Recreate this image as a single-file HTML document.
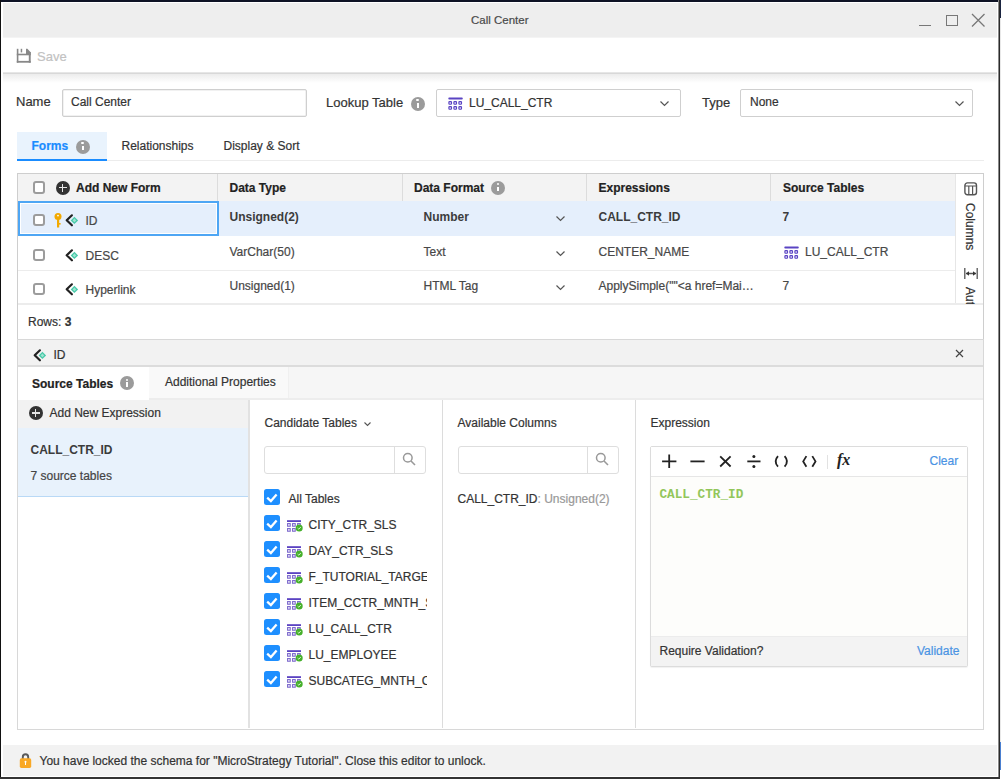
<!DOCTYPE html>
<html><head><meta charset="utf-8">
<style>
*{box-sizing:border-box;margin:0;padding:0}
html,body{width:1001px;height:780px;overflow:hidden;background:#fff}
body{position:relative;font-family:"Liberation Sans",sans-serif;font-size:12px;color:#333}
.a{position:absolute}
.t{position:absolute;white-space:nowrap;line-height:1}
svg{position:absolute;overflow:visible}
.info{position:absolute;width:14px;height:14px;border-radius:50%;background:#9b9b9b}
.info:before{content:"";position:absolute;left:5.9px;top:2.6px;width:2.2px;height:2.2px;background:#fff;border-radius:50%}
.info:after{content:"";position:absolute;left:6px;top:6.3px;width:2px;height:4.7px;background:#fff}
.cb{position:absolute;width:12.5px;height:12.5px;border:2px solid #9c9c9c;border-radius:3px;background:#fff}
.cbc{position:absolute;width:16px;height:16px;border-radius:2px;background:#1e8fff}
.cbc:after{content:"";position:absolute;left:5px;top:1.8px;width:5.5px;height:9.5px;border-right:2.3px solid #fff;border-bottom:2.3px solid #fff;transform:rotate(42deg)}
.plus{position:absolute;width:14px;height:14px;border-radius:50%;background:#333}
.plus:before{content:"";position:absolute;left:3px;top:6.25px;width:8px;height:1.6px;background:#e6e6e6}
.plus:after{content:"";position:absolute;left:6.2px;top:3px;width:1.6px;height:8px;background:#e6e6e6}
.t{-webkit-text-stroke:0.2px currentColor}</style></head><body>
<!-- window frame -->
<div class="a" style="left:0;top:0;width:1001px;height:2px;background:#0e1325"></div>
<div class="a" style="left:0;top:0;width:1px;height:779px;background:#111"></div>
<div class="a" style="left:998px;top:0;width:1px;height:779px;background:#8a8a8a"></div><div class="a" style="left:999px;top:0;width:1px;height:779px;background:#2a2a2a"></div><div class="a" style="left:1000px;top:18px;width:1px;height:724px;background:#e8e8e8"></div>
<div class="a" style="left:1000px;top:0;width:1px;height:18px;background:#1a2440"></div><div class="a" style="left:1000px;top:742px;width:1px;height:28px;background:#4a7fd0"></div>
<div class="a" style="left:0;top:777px;width:1000px;height:2px;background:#333"></div>

<!-- title bar -->
<div class="a" style="left:3px;top:3px;width:994px;height:34px;background:#eeeeee"></div><div class="a" style="left:3px;top:37px;width:994px;height:1px;background:#f4f4f4"></div>
<div class="t" style="left:471px;top:15px;font-size:11.5px;color:#4a4a4a">Call Center</div>
<div class="a" style="left:919px;top:24.5px;width:11.5px;height:1.5px;background:#777"></div>
<div class="a" style="left:946px;top:14.5px;width:11.5px;height:11px;border:1.5px solid #777"></div>
<svg style="left:972px;top:13.5px" width="12.5" height="12.5"><path d="M0 0L12.5 12.5M12.5 0L0 12.5" stroke="#777" stroke-width="1.3"/></svg>

<!-- toolbar -->
<svg style="left:16px;top:48px" width="16" height="16" viewBox="0 0 16 16"><g fill="#888"><rect x="0.8" y="0.8" width="1.6" height="13.9"/><rect x="4.7" y="0.8" width="1.5" height="3.6"/><path d="M10 0.8H11.4L14.7 4.2V6.5H10Z"/><rect x="0.8" y="5.7" width="13.9" height="1.6"/><rect x="12.8" y="4" width="1.9" height="10.7"/><rect x="0.8" y="12.9" width="13.9" height="1.8"/></g></svg>
<div class="t" style="left:37px;top:49.5px;font-size:13px;color:#c2c2c2">Save</div>
<div class="a" style="left:3px;top:72px;width:994px;height:1px;background:#e6e6e6"></div><div class="a" style="left:3px;top:73px;width:994px;height:1px;background:#d8d8d8"></div>
<div class="a" style="left:3px;top:74px;width:994px;height:9px;background:linear-gradient(#ececec,#ffffff)"></div>

<!-- name row -->
<div class="t" style="left:16px;top:95px;font-size:13px;color:#333">Name</div>
<div class="a" style="left:62px;top:89px;width:245px;height:28px;border:1px solid #cfcfcf;border-radius:2px;box-shadow:inset 0 0 0 0.5px #e4e4e4"></div>
<div class="t" style="left:71px;top:96px;color:#333">Call Center</div>

<div class="t" style="left:326px;top:96px;font-size:13px;color:#333">Lookup Table</div>
<div class="info" style="left:410.5px;top:96.7px"></div>
<div class="a" style="left:436px;top:89px;width:245px;height:28px;border:1px solid #cfcfcf;border-radius:2px"></div>
<svg style="left:448px;top:97px" width="15" height="13" viewBox="0 0 15 13"><rect x="0.3" y="0.6" width="14.5" height="1.8" rx="0.9" fill="#5a44c3"/><g fill="#e4def6" stroke="#5a44c3" stroke-width="1.15"><rect x="0.9" y="4.6" width="2.6" height="2.6" rx="0.6"/><rect x="5.9" y="4.6" width="2.6" height="2.6" rx="0.6"/><rect x="10.9" y="4.6" width="2.6" height="2.6" rx="0.6"/><rect x="0.9" y="9.6" width="2.6" height="2.6" rx="0.6"/><rect x="5.9" y="9.6" width="2.6" height="2.6" rx="0.6"/><rect x="10.9" y="9.6" width="2.6" height="2.6" rx="0.6"/></g></svg>
<div class="t" style="left:469px;top:97px;color:#333">LU_CALL_CTR</div>
<svg style="left:660px;top:100.5px" width="9" height="5"><path d="M0.5 0.5L4.5 4.5L8.5 0.5" fill="none" stroke="#555" stroke-width="1.2"/></svg>

<div class="t" style="left:702px;top:96px;font-size:13px;color:#333">Type</div>
<div class="a" style="left:740px;top:89px;width:233px;height:28px;border:1px solid #cfcfcf;border-radius:2px"></div>
<div class="t" style="left:750px;top:96px;color:#333">None</div>
<svg style="left:955px;top:100.5px" width="9" height="5"><path d="M0.5 0.5L4.5 4.5L8.5 0.5" fill="none" stroke="#555" stroke-width="1.2"/></svg>

<!-- tabs -->
<div class="a" style="left:17px;top:132px;width:90px;height:27px;background:#e9f3fd"></div>
<div class="a" style="left:17px;top:159px;width:90px;height:2px;background:#1a8cff"></div>
<div class="a" style="left:107px;top:160px;width:877px;height:1px;background:#ececec"></div>
<div class="t" style="left:31.5px;top:140px;font-weight:bold;color:#1a8cff">Forms</div>
<div class="info" style="left:75.5px;top:139.5px"></div>
<div class="t" style="left:121.5px;top:139.5px;color:#333">Relationships</div>
<div class="t" style="left:223.5px;top:139.5px;color:#333">Display &amp; Sort</div>

<!-- forms table -->
<div class="a" style="left:17px;top:173px;width:967px;height:167px;border:1px solid #cecece"></div>
<div class="a" style="left:18px;top:174px;width:937px;height:27px;background:#f3f3f3"></div>
<div class="a" style="left:217px;top:174px;width:1px;height:27px;background:#dcdcdc"></div>
<div class="a" style="left:402px;top:174px;width:1px;height:27px;background:#dcdcdc"></div>
<div class="a" style="left:586px;top:174px;width:1px;height:27px;background:#dcdcdc"></div>
<div class="a" style="left:770px;top:174px;width:1px;height:27px;background:#dcdcdc"></div>
<div class="a" style="left:955px;top:174px;width:1px;height:130px;background:#e6e6e6"></div>
<div class="cb" style="left:32.5px;top:181px"></div>
<div class="plus" style="left:55.5px;top:180.5px"></div>
<div class="t" style="left:76px;top:182px;font-weight:bold;color:#222">Add New Form</div>
<div class="t" style="left:229.5px;top:182px;font-weight:bold;color:#222">Data Type</div>
<div class="t" style="left:414px;top:182px;font-weight:bold;color:#222">Data Format</div>
<div class="info" style="left:491.3px;top:180.5px"></div>
<div class="t" style="left:598.5px;top:182px;font-weight:bold;color:#222">Expressions</div>
<div class="t" style="left:783px;top:182px;font-weight:bold;color:#222">Source Tables</div>

<!-- row 1 -->
<div class="a" style="left:18px;top:201px;width:937px;height:35px;background:#e5effc"></div>
<div class="a" style="left:18px;top:201px;width:201px;height:35px;border:2px solid #4ea6f4;box-shadow:inset 0 0 0 1px #fff"></div>
<div class="cb" style="left:32.5px;top:213.5px"></div>
<svg style="left:54px;top:213px" width="8" height="15" viewBox="0 0 8 15"><circle cx="4" cy="3.6" r="3.5" fill="#f2a900"/><circle cx="4" cy="2.6" r="0.9" fill="#fff"/><rect x="3" y="6" width="2.2" height="8.5" fill="#f2a900"/><rect x="5" y="10" width="1.6" height="1.6" fill="#f2a900"/></svg>
<svg style="left:65px;top:214px" width="14" height="13" viewBox="0 0 14 13"><path d="M6.9 1.3L1.7 6.3L6.9 11.3" fill="none" stroke="#222" stroke-width="2.2" stroke-linecap="round" stroke-linejoin="round"/><path d="M9.4 2.7L13.1 6.4L9.4 10.1L5.7 6.4Z" fill="#48caa9"/><path d="M9.4 4.6L11.2 6.4L9.4 8.2L7.6 6.4Z" fill="#9fe3d2"/></svg>
<div class="t" style="left:85.5px;top:215px;color:#474747">ID</div>
<div class="t" style="left:229.5px;top:211px;font-weight:bold;color:#3c3c3c;-webkit-text-stroke:0">Unsigned(2)</div>
<div class="t" style="left:423.5px;top:211px;font-weight:bold;color:#3c3c3c;-webkit-text-stroke:0">Number</div>
<svg style="left:555.5px;top:215.5px" width="9" height="5"><path d="M0.5 0.5L4.5 4.5L8.5 0.5" fill="none" stroke="#555" stroke-width="1.2"/></svg>
<div class="t" style="left:598.5px;top:211px;font-weight:bold;color:#3c3c3c;-webkit-text-stroke:0">CALL_CTR_ID</div>
<div class="t" style="left:782.5px;top:211px;font-weight:bold;color:#3c3c3c;-webkit-text-stroke:0">7</div>

<!-- row 2 -->
<div class="a" style="left:18px;top:269.5px;width:937px;height:1px;background:#ececec"></div>
<div class="cb" style="left:32.5px;top:248.5px"></div>
<svg style="left:65px;top:249px" width="14" height="13" viewBox="0 0 14 13"><path d="M6.9 1.3L1.7 6.3L6.9 11.3" fill="none" stroke="#222" stroke-width="2.2" stroke-linecap="round" stroke-linejoin="round"/><path d="M9.4 2.7L13.1 6.4L9.4 10.1L5.7 6.4Z" fill="#48caa9"/><path d="M9.4 4.6L11.2 6.4L9.4 8.2L7.6 6.4Z" fill="#9fe3d2"/></svg>
<div class="t" style="left:85.5px;top:250px;color:#474747">DESC</div>
<div class="t" style="left:229.5px;top:246px;color:#474747">VarChar(50)</div>
<div class="t" style="left:423.5px;top:246px;color:#474747">Text</div>
<svg style="left:555.5px;top:250.5px" width="9" height="5"><path d="M0.5 0.5L4.5 4.5L8.5 0.5" fill="none" stroke="#555" stroke-width="1.2"/></svg>
<div class="t" style="left:598.5px;top:246px;color:#474747">CENTER_NAME</div>
<svg style="left:784px;top:245.5px" width="15" height="13" viewBox="0 0 15 13"><rect x="0.3" y="0.6" width="14.5" height="1.8" rx="0.9" fill="#5a44c3"/><g fill="#e4def6" stroke="#5a44c3" stroke-width="1.15"><rect x="0.9" y="4.6" width="2.6" height="2.6" rx="0.6"/><rect x="5.9" y="4.6" width="2.6" height="2.6" rx="0.6"/><rect x="10.9" y="4.6" width="2.6" height="2.6" rx="0.6"/><rect x="0.9" y="9.6" width="2.6" height="2.6" rx="0.6"/><rect x="5.9" y="9.6" width="2.6" height="2.6" rx="0.6"/><rect x="10.9" y="9.6" width="2.6" height="2.6" rx="0.6"/></g></svg>
<div class="t" style="left:805px;top:246px;color:#474747">LU_CALL_CTR</div>

<!-- row 3 -->
<div class="a" style="left:18px;top:302.5px;width:965px;height:2px;background:#ececec"></div>
<div class="cb" style="left:32.5px;top:282.5px"></div>
<svg style="left:65px;top:283px" width="14" height="13" viewBox="0 0 14 13"><path d="M6.9 1.3L1.7 6.3L6.9 11.3" fill="none" stroke="#222" stroke-width="2.2" stroke-linecap="round" stroke-linejoin="round"/><path d="M9.4 2.7L13.1 6.4L9.4 10.1L5.7 6.4Z" fill="#48caa9"/><path d="M9.4 4.6L11.2 6.4L9.4 8.2L7.6 6.4Z" fill="#9fe3d2"/></svg>
<div class="t" style="left:85.5px;top:284px;color:#474747">Hyperlink</div>
<div class="t" style="left:229.5px;top:280px;color:#474747">Unsigned(1)</div>
<div class="t" style="left:423.5px;top:280px;color:#474747">HTML Tag</div>
<svg style="left:555.5px;top:284.5px" width="9" height="5"><path d="M0.5 0.5L4.5 4.5L8.5 0.5" fill="none" stroke="#555" stroke-width="1.2"/></svg>
<div class="t" style="left:598.5px;top:280px;color:#474747">ApplySimple(""&lt;a href=Mai…</div>
<div class="t" style="left:782.5px;top:280px;color:#474747">7</div>

<!-- side panel -->
<svg style="left:963.5px;top:181.5px" width="14" height="14" viewBox="0 0 14 14"><rect x="0.9" y="0.9" width="11.6" height="11.8" rx="2.5" fill="none" stroke="#555" stroke-width="1.4"/><path d="M0.9 4H12.5M4.8 4V12.6M8.6 4V12.6" stroke="#555" stroke-width="1.2"/></svg>
<div class="t" style="left:976px;top:203px;transform-origin:0 0;transform:rotate(90deg);color:#333">Columns</div>
<svg style="left:963.5px;top:268px" width="14" height="11" viewBox="0 0 14 11"><path d="M0.8 0V11M13.2 0V11M2 5.5H12" stroke="#555" stroke-width="1.3"/><path d="M2 5.5L5 3.3V7.7Z M12 5.5L9 3.3V7.7Z" fill="#333"/></svg>
<div class="a" style="left:956px;top:284px;width:27px;height:20px;overflow:hidden"><div class="t" style="left:20px;top:3px;transform-origin:0 0;transform:rotate(90deg);color:#333">Auto-fit</div></div>

<div class="t" style="left:28px;top:316px;color:#333">Rows: <b>3</b></div>

<!-- detail panel -->
<div class="a" style="left:17px;top:339px;width:967px;height:391px;border:1px solid #d8d8d8"></div>
<div class="a" style="left:18px;top:340px;width:965px;height:27px;background:#f2f2f2;border-bottom:2px solid #dcdcdc"></div>
<svg style="left:33px;top:348.5px" width="14" height="13" viewBox="0 0 14 13"><path d="M6.9 1.3L1.7 6.3L6.9 11.3" fill="none" stroke="#222" stroke-width="2.2" stroke-linecap="round" stroke-linejoin="round"/><path d="M9.4 2.7L13.1 6.4L9.4 10.1L5.7 6.4Z" fill="#48caa9"/><path d="M9.4 4.6L11.2 6.4L9.4 8.2L7.6 6.4Z" fill="#9fe3d2"/></svg>
<div class="t" style="left:53.5px;top:349px;color:#333">ID</div>
<svg style="left:956px;top:349.8px" width="7" height="7"><path d="M0 0L7 7M7 0L0 7" stroke="#444" stroke-width="1.2"/></svg>

<div class="a" style="left:18px;top:367px;width:965px;height:31px;background:#f6f6f6"></div><div class="a" style="left:18px;top:398px;width:965px;height:2px;background:#ededed"></div>
<div class="a" style="left:18px;top:367px;width:131px;height:33px;background:#fff"></div>
<div class="a" style="left:149px;top:367px;width:140px;height:31px;background:#f9f9f9;border-right:1px solid #f0f0f0"></div>
<div class="t" style="left:32px;top:377.5px;font-weight:bold;color:#222">Source Tables</div>
<div class="info" style="left:120px;top:376.2px"></div>
<div class="t" style="left:165px;top:376px;color:#333">Additional Properties</div>

<!-- expressions left panel -->
<div class="a" style="left:18px;top:400px;width:231px;height:28px;background:#f2f2f2"></div>
<div class="plus" style="left:28.5px;top:406px"></div>
<div class="t" style="left:49.5px;top:407px;color:#333">Add New Expression</div>
<div class="a" style="left:18px;top:428px;width:231px;height:69px;background:#e8f2fc;border-bottom:1px solid #b9d9f6"></div>
<div class="t" style="left:30.5px;top:443.5px;font-weight:bold;color:#3c3c3c;-webkit-text-stroke:0">CALL_CTR_ID</div>
<div class="t" style="left:30.5px;top:469.5px;color:#444">7 source tables</div>
<div class="a" style="left:248px;top:400px;width:2px;height:328px;background:#e2e2e2"></div>

<!-- candidate tables -->
<div class="t" style="left:264.5px;top:417px;color:#333">Candidate Tables</div>
<svg style="left:363.5px;top:421.5px" width="7" height="4"><path d="M0.5 0.5L3.5 3.5L6.5 0.5" fill="none" stroke="#555" stroke-width="1.1"/></svg>
<div class="a" style="left:264px;top:445.5px;width:162px;height:28px;border:1px solid #dedede;border-radius:3px"></div>
<div class="a" style="left:393.5px;top:446px;width:1px;height:27px;background:#dedede"></div>
<svg style="left:402px;top:452px" width="14" height="14"><circle cx="5.8" cy="5.8" r="4.3" fill="none" stroke="#999" stroke-width="1.5"/><path d="M9 9L13 13" stroke="#999" stroke-width="1.6"/></svg>
<svg style="left:264.10px;top:489.00px" width="16" height="16"><rect width="16" height="16" rx="2.5" fill="#1e8fff"/><path d="M3.2 8.6L6.9 12L12.6 5.6" stroke="#fff" stroke-width="2.3" fill="none"/></svg>
<div class="t" style="left:288.5px;top:492.5px;color:#333">All Tables</div>
<div class="a" style="left:260px;top:510px;width:167px;height:182px;overflow:hidden" ><svg style="left:4.10px;top:5.00px" width="16" height="16"><rect width="16" height="16" rx="2.5" fill="#1e8fff"/><path d="M3.2 8.6L6.9 12L12.6 5.6" stroke="#fff" stroke-width="2.3" fill="none"/></svg><svg style="left:27.2px;top:10.2px" width="16" height="14" viewBox="0 0 16 14"><rect x="0" y="0.2" width="14" height="1.8" fill="#5b43c2"/><g fill="none" stroke="#7a66cc" stroke-width="1.1"><rect x="0.6" y="3.6" width="2.6" height="2.6"/><rect x="5.6" y="3.6" width="2.6" height="2.6"/><rect x="10.6" y="3.6" width="2.6" height="2.6"/><rect x="0.6" y="8.6" width="2.6" height="2.6"/><rect x="5.6" y="8.6" width="2.6" height="2.6"/></g><circle cx="12.2" cy="8" r="3.5" fill="#46b02c"/><path d="M10.6 8L11.8 9.2L13.8 7" fill="none" stroke="#d9f5cc" stroke-width="1"/></svg><div class="t" style="left:48.5px;top:9.0px;color:#333">CITY_CTR_SLS</div><svg style="left:4.10px;top:31.00px" width="16" height="16"><rect width="16" height="16" rx="2.5" fill="#1e8fff"/><path d="M3.2 8.6L6.9 12L12.6 5.6" stroke="#fff" stroke-width="2.3" fill="none"/></svg><svg style="left:27.2px;top:36.2px" width="16" height="14" viewBox="0 0 16 14"><rect x="0" y="0.2" width="14" height="1.8" fill="#5b43c2"/><g fill="none" stroke="#7a66cc" stroke-width="1.1"><rect x="0.6" y="3.6" width="2.6" height="2.6"/><rect x="5.6" y="3.6" width="2.6" height="2.6"/><rect x="10.6" y="3.6" width="2.6" height="2.6"/><rect x="0.6" y="8.6" width="2.6" height="2.6"/><rect x="5.6" y="8.6" width="2.6" height="2.6"/></g><circle cx="12.2" cy="8" r="3.5" fill="#46b02c"/><path d="M10.6 8L11.8 9.2L13.8 7" fill="none" stroke="#d9f5cc" stroke-width="1"/></svg><div class="t" style="left:48.5px;top:35.0px;color:#333">DAY_CTR_SLS</div><svg style="left:4.10px;top:57.00px" width="16" height="16"><rect width="16" height="16" rx="2.5" fill="#1e8fff"/><path d="M3.2 8.6L6.9 12L12.6 5.6" stroke="#fff" stroke-width="2.3" fill="none"/></svg><svg style="left:27.2px;top:62.2px" width="16" height="14" viewBox="0 0 16 14"><rect x="0" y="0.2" width="14" height="1.8" fill="#5b43c2"/><g fill="none" stroke="#7a66cc" stroke-width="1.1"><rect x="0.6" y="3.6" width="2.6" height="2.6"/><rect x="5.6" y="3.6" width="2.6" height="2.6"/><rect x="10.6" y="3.6" width="2.6" height="2.6"/><rect x="0.6" y="8.6" width="2.6" height="2.6"/><rect x="5.6" y="8.6" width="2.6" height="2.6"/></g><circle cx="12.2" cy="8" r="3.5" fill="#46b02c"/><path d="M10.6 8L11.8 9.2L13.8 7" fill="none" stroke="#d9f5cc" stroke-width="1"/></svg><div class="t" style="left:48.5px;top:61.0px;color:#333">F_TUTORIAL_TARGETS</div><svg style="left:4.10px;top:83.00px" width="16" height="16"><rect width="16" height="16" rx="2.5" fill="#1e8fff"/><path d="M3.2 8.6L6.9 12L12.6 5.6" stroke="#fff" stroke-width="2.3" fill="none"/></svg><svg style="left:27.2px;top:88.2px" width="16" height="14" viewBox="0 0 16 14"><rect x="0" y="0.2" width="14" height="1.8" fill="#5b43c2"/><g fill="none" stroke="#7a66cc" stroke-width="1.1"><rect x="0.6" y="3.6" width="2.6" height="2.6"/><rect x="5.6" y="3.6" width="2.6" height="2.6"/><rect x="10.6" y="3.6" width="2.6" height="2.6"/><rect x="0.6" y="8.6" width="2.6" height="2.6"/><rect x="5.6" y="8.6" width="2.6" height="2.6"/></g><circle cx="12.2" cy="8" r="3.5" fill="#46b02c"/><path d="M10.6 8L11.8 9.2L13.8 7" fill="none" stroke="#d9f5cc" stroke-width="1"/></svg><div class="t" style="left:48.5px;top:87.0px;color:#333">ITEM_CCTR_MNTH_SLS</div><svg style="left:4.10px;top:109.00px" width="16" height="16"><rect width="16" height="16" rx="2.5" fill="#1e8fff"/><path d="M3.2 8.6L6.9 12L12.6 5.6" stroke="#fff" stroke-width="2.3" fill="none"/></svg><svg style="left:27.2px;top:114.2px" width="16" height="14" viewBox="0 0 16 14"><rect x="0" y="0.2" width="14" height="1.8" fill="#5b43c2"/><g fill="none" stroke="#7a66cc" stroke-width="1.1"><rect x="0.6" y="3.6" width="2.6" height="2.6"/><rect x="5.6" y="3.6" width="2.6" height="2.6"/><rect x="10.6" y="3.6" width="2.6" height="2.6"/><rect x="0.6" y="8.6" width="2.6" height="2.6"/><rect x="5.6" y="8.6" width="2.6" height="2.6"/></g><circle cx="12.2" cy="8" r="3.5" fill="#46b02c"/><path d="M10.6 8L11.8 9.2L13.8 7" fill="none" stroke="#d9f5cc" stroke-width="1"/></svg><div class="t" style="left:48.5px;top:113.0px;color:#333">LU_CALL_CTR</div><svg style="left:4.10px;top:135.00px" width="16" height="16"><rect width="16" height="16" rx="2.5" fill="#1e8fff"/><path d="M3.2 8.6L6.9 12L12.6 5.6" stroke="#fff" stroke-width="2.3" fill="none"/></svg><svg style="left:27.2px;top:140.2px" width="16" height="14" viewBox="0 0 16 14"><rect x="0" y="0.2" width="14" height="1.8" fill="#5b43c2"/><g fill="none" stroke="#7a66cc" stroke-width="1.1"><rect x="0.6" y="3.6" width="2.6" height="2.6"/><rect x="5.6" y="3.6" width="2.6" height="2.6"/><rect x="10.6" y="3.6" width="2.6" height="2.6"/><rect x="0.6" y="8.6" width="2.6" height="2.6"/><rect x="5.6" y="8.6" width="2.6" height="2.6"/></g><circle cx="12.2" cy="8" r="3.5" fill="#46b02c"/><path d="M10.6 8L11.8 9.2L13.8 7" fill="none" stroke="#d9f5cc" stroke-width="1"/></svg><div class="t" style="left:48.5px;top:139.0px;color:#333">LU_EMPLOYEE</div><svg style="left:4.10px;top:161.00px" width="16" height="16"><rect width="16" height="16" rx="2.5" fill="#1e8fff"/><path d="M3.2 8.6L6.9 12L12.6 5.6" stroke="#fff" stroke-width="2.3" fill="none"/></svg><svg style="left:27.2px;top:166.2px" width="16" height="14" viewBox="0 0 16 14"><rect x="0" y="0.2" width="14" height="1.8" fill="#5b43c2"/><g fill="none" stroke="#7a66cc" stroke-width="1.1"><rect x="0.6" y="3.6" width="2.6" height="2.6"/><rect x="5.6" y="3.6" width="2.6" height="2.6"/><rect x="10.6" y="3.6" width="2.6" height="2.6"/><rect x="0.6" y="8.6" width="2.6" height="2.6"/><rect x="5.6" y="8.6" width="2.6" height="2.6"/></g><circle cx="12.2" cy="8" r="3.5" fill="#46b02c"/><path d="M10.6 8L11.8 9.2L13.8 7" fill="none" stroke="#d9f5cc" stroke-width="1"/></svg><div class="t" style="left:48.5px;top:165.0px;color:#333">SUBCATEG_MNTH_CTR_SLS</div></div>
<div class="a" style="left:441.5px;top:400px;width:1px;height:328px;background:#dcdcdc"></div>

<!-- available columns -->
<div class="t" style="left:457.5px;top:417px;color:#333">Available Columns</div>
<div class="a" style="left:457.5px;top:445.5px;width:161px;height:28px;border:1px solid #dedede;border-radius:3px"></div>
<div class="a" style="left:586.5px;top:446px;width:1px;height:27px;background:#dedede"></div>
<svg style="left:595px;top:452px" width="14" height="14"><circle cx="5.8" cy="5.8" r="4.3" fill="none" stroke="#999" stroke-width="1.5"/><path d="M9 9L13 13" stroke="#999" stroke-width="1.6"/></svg>
<div class="t" style="left:457.5px;top:493px;color:#333">CALL_CTR_ID<span style="color:#999">: Unsigned(2)</span></div>
<div class="a" style="left:634.5px;top:400px;width:1px;height:328px;background:#dcdcdc"></div>

<!-- expression -->
<div class="t" style="left:650.5px;top:417px;color:#333">Expression</div>
<div class="a" style="left:650px;top:445.5px;width:318px;height:221px;border:1px solid #dcdcdc;border-radius:2px;background:#fdfdfb;box-shadow:0 1px 1px rgba(0,0,0,0.06)"></div>
<div class="a" style="left:651px;top:446.5px;width:316px;height:30px;background:#fff;border-bottom:1px solid #e6e6e6"></div>
<svg style="left:662px;top:454px" width="160" height="15" viewBox="0 0 160 15">
<g stroke="#222" stroke-width="1.8" fill="none"><path d="M0.1 7.4H14.4M7.2 0.4V14.1"/><path d="M28.4 7.4H42.6"/><path d="M58.2 2.3L68.6 12.5M68.6 2.3L58.2 12.5"/><path d="M85.3 7.4H98.5"/></g>
<circle cx="91.9" cy="2.4" r="1.5" fill="#222"/><circle cx="91.9" cy="12.4" r="1.5" fill="#222"/>
<g stroke="#222" stroke-width="1.8" fill="none"><path d="M116 2.1Q111.2 7.4 116 12.7M122.6 2.1Q127.4 7.4 122.6 12.7"/><path d="M144.4 2.1L141.2 7.4L144.4 12.7M150.3 2.1L153.5 7.4L150.3 12.7"/></g>
</svg>
<div class="a" style="left:826.5px;top:454.5px;width:1px;height:14px;background:#e2e2e2"></div>
<div class="t" style="left:837px;top:452px;font-family:'Liberation Serif',serif;font-style:italic;font-weight:bold;font-size:16px;color:#222;-webkit-text-stroke:0">fx</div>
<div class="t" style="left:929.5px;top:455px;color:#4a93e4">Clear</div>
<div class="t" style="left:659.5px;top:489px;font-family:'Liberation Mono',monospace;font-weight:bold;font-size:12.7px;color:#92c65a;-webkit-text-stroke:0">CALL_CTR_ID</div>
<div class="a" style="left:651px;top:636px;width:316px;height:29.5px;background:#f3f3f3;border-top:1px solid #ececec"></div>
<div class="t" style="left:659.5px;top:645px;color:#333">Require Validation?</div>
<div class="t" style="left:917px;top:645px;color:#4a93e4">Validate</div>

<!-- status bar -->
<div class="a" style="left:3px;top:745px;width:994px;height:31px;background:#f2f2f2"></div>
<svg style="left:19px;top:752px" width="13" height="17" viewBox="0 0 13 17"><path d="M3.8 7.5V5A2.7 2.7 0 0 1 9.2 5V7.5" fill="none" stroke="#5a5a5a" stroke-width="1.9"/><rect x="0.8" y="6.3" width="11.4" height="9.6" rx="1.6" fill="#f9a825"/><rect x="6" y="9.5" width="1" height="3.5" fill="#fff"/><circle cx="6.5" cy="9.8" r="1" fill="#fff"/></svg>
<div class="t" style="left:39.5px;top:754.5px;color:#333">You have locked the schema for "MicroStrategy Tutorial". Close this editor to unlock.</div>
</body></html>
